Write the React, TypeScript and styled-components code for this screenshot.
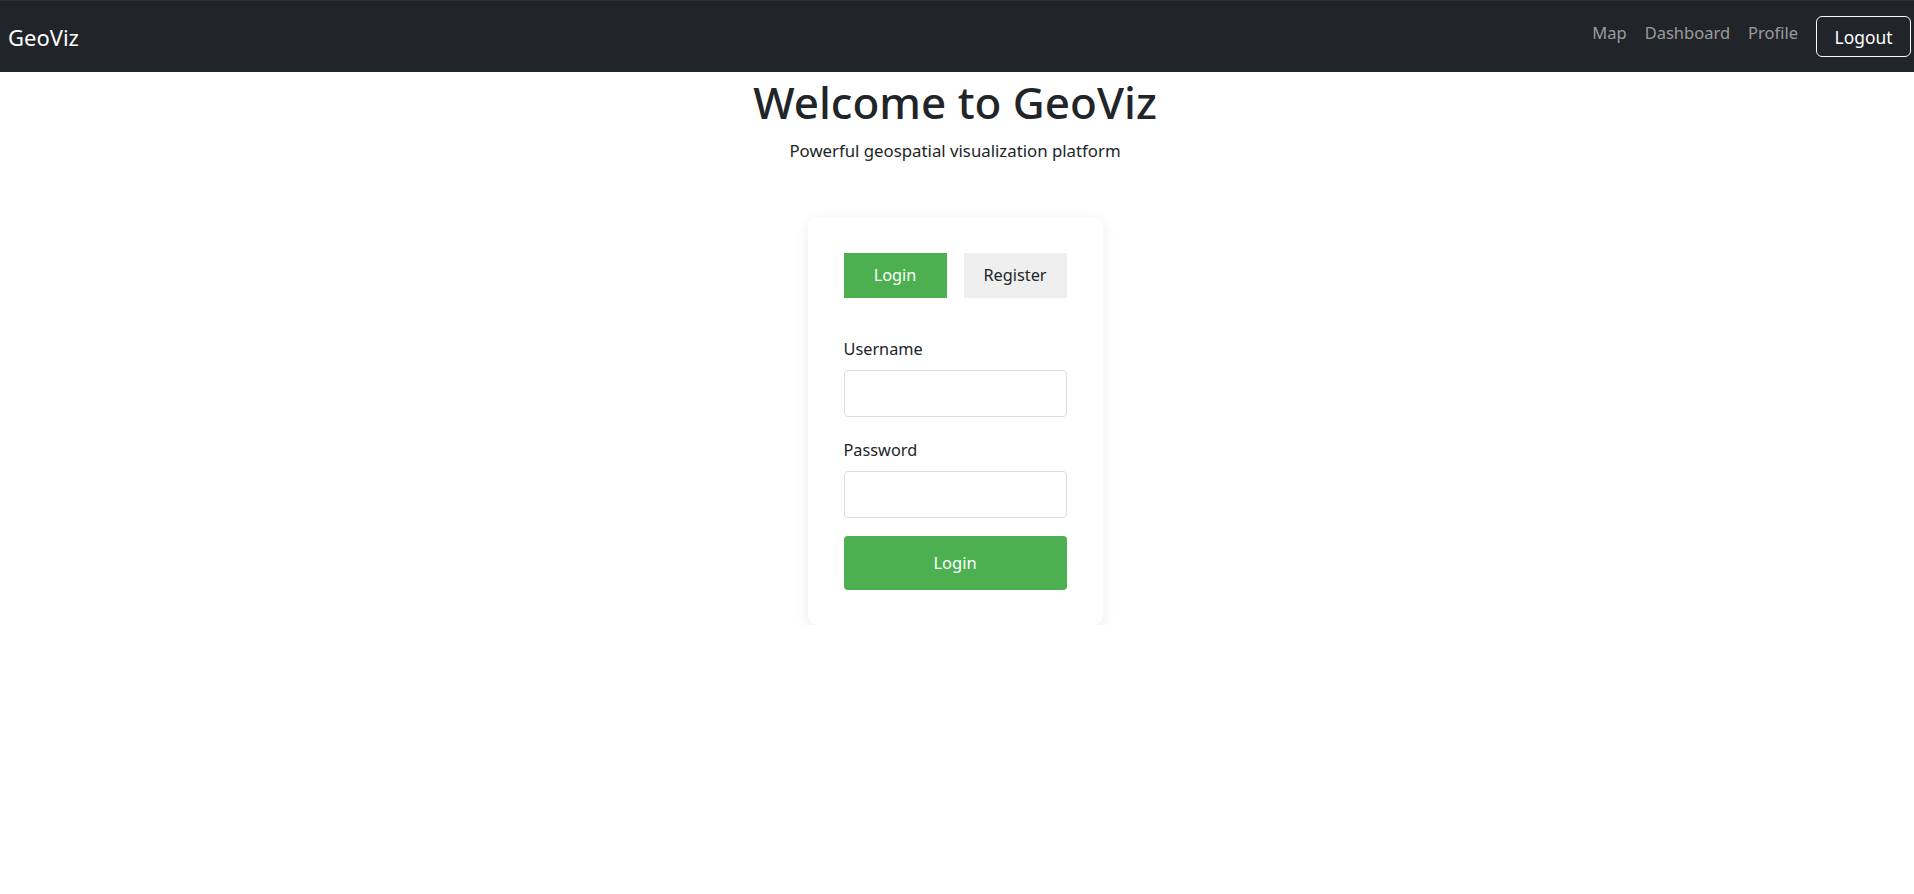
import React from "react";
import styled, { createGlobalStyle } from "styled-components";

const GlobalStyle = createGlobalStyle`
  html, body { margin: 0; padding: 0; background: #ffffff; }
  body {
    font-family: "Noto Sans", "Open Sans", sans-serif;
    color: #212529;
  }
  * { box-sizing: border-box; }
`;

const NavBar = styled.nav`
  height: 72px;
  background: #212529;
  border-top: 1px solid #2c3035;
  display: flex;
  align-items: center;
  justify-content: space-between;
  padding: 0 3px 0 8px;
`;

const Brand = styled.a`
  color: #ffffff;
  font-size: 22px;
  text-decoration: none;
`;

const NavRight = styled.div`
  display: flex;
  align-items: center;
  gap: 18px;
`;

const NavLink = styled.a`
  color: rgba(255, 255, 255, 0.55);
  font-size: 16.5px;
  text-decoration: none;
  margin-bottom: 9px;
`;

const LogoutButton = styled.button`
  font-family: inherit;
  height: 41px;
  width: 95px;
  background: transparent;
  color: #ffffff;
  border: 1px solid #f8f9fa;
  border-radius: 6px;
  font-size: 17.4px;
  padding: 0;
  cursor: pointer;
`;

const Main = styled.main`
  display: flex;
  flex-direction: column;
  align-items: center;
  padding-right: 4px;
`;

const Title = styled.h1`
  margin: 4px 0 0;
  font-size: 44px;
  font-weight: 500;
  line-height: 1.2;
`;

const Subtitle = styled.p`
  margin: 10px 0 0;
  font-size: 16.8px;
`;

const Card = styled.section`
  margin-top: 55px;
  width: 295px;
  padding: 36px 36px 35px;
  background: #ffffff;
  border-radius: 10px;
  box-shadow: 0 4px 14px rgba(0, 0, 0, 0.08);
  display: flex;
  flex-direction: column;
`;

const Tabs = styled.div`
  display: flex;
  justify-content: space-between;
  margin-bottom: 39px;
`;

const Tab = styled.button<{ $active?: boolean }>`
  font-family: inherit;
  width: 103px;
  height: 45px;
  border: none;
  border-radius: 0;
  font-size: 16.3px;
  padding: 0;
  cursor: pointer;
  background: ${(p) => (p.$active ? "#4caf50" : "#efefef")};
  color: ${(p) => (p.$active ? "#ffffff" : "#212529")};
`;

const Field = styled.div<{ $last?: boolean }>`
  display: flex;
  flex-direction: column;
  margin-bottom: ${(p) => (p.$last ? 18 : 21)}px;
`;

const Label = styled.label`
  font-size: 16.3px;
  line-height: 24px;
  margin-bottom: 9px;
`;

const Input = styled.input`
  height: 47px;
  border: 1px solid #dddddd;
  border-radius: 4px;
  padding: 0 10px;
  font-size: 16px;
  font-family: inherit;
`;

const SubmitButton = styled.button`
  font-family: inherit;
  height: 54px;
  border: none;
  border-radius: 4px;
  background: #4caf50;
  color: #ffffff;
  font-size: 16.5px;
  cursor: pointer;
`;

export default function App() {
  return (
    <>
      <GlobalStyle />
      <NavBar>
        <Brand href="#">GeoViz</Brand>
        <NavRight>
          <NavLink href="#">Map</NavLink>
          <NavLink href="#">Dashboard</NavLink>
          <NavLink href="#">Profile</NavLink>
          <LogoutButton>Logout</LogoutButton>
        </NavRight>
      </NavBar>
      <Main>
        <Title>Welcome to GeoViz</Title>
        <Subtitle>Powerful geospatial visualization platform</Subtitle>
        <Card>
          <Tabs>
            <Tab $active>Login</Tab>
            <Tab>Register</Tab>
          </Tabs>
          <Field>
            <Label>Username</Label>
            <Input type="text" />
          </Field>
          <Field $last>
            <Label>Password</Label>
            <Input type="password" />
          </Field>
          <SubmitButton>Login</SubmitButton>
        </Card>
      </Main>
    </>
  );
}
